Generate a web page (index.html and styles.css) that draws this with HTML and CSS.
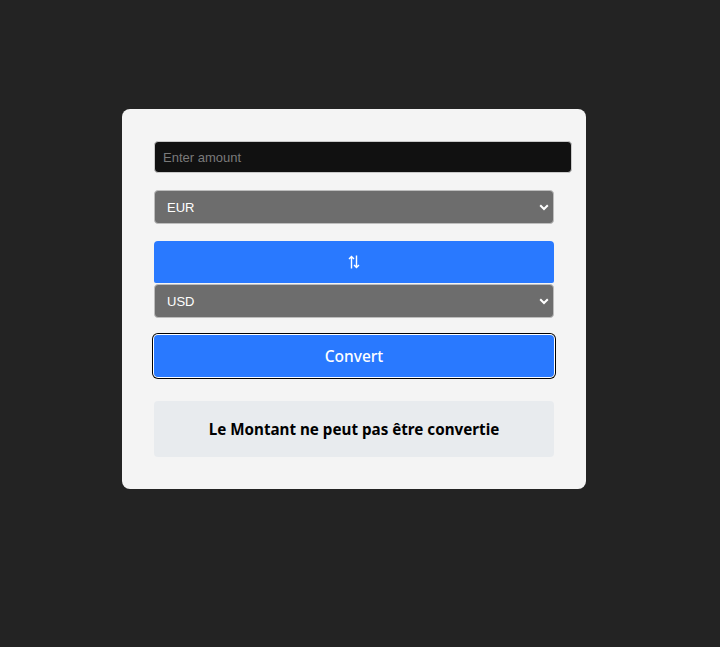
FILE: index.html
```html
<!DOCTYPE html>
<html lang="fr">
<head>
<meta charset="utf-8">
<title>Currency converter</title>
<link rel="stylesheet" href="styles.css">
</head>
<body>
<main class="card">
  <input class="amount" type="text" placeholder="Enter amount">
  <div class="select-wrap from">
    <select class="currency"><option>EUR</option></select>
    <svg class="chev" width="10" height="7" viewBox="0 0 10 7"><path d="M1.2 1.2 L5 5 L8.8 1.2" fill="none" stroke="#fff" stroke-width="2"/></svg>
  </div>
  <button class="swap" type="button" aria-label="swap">
    <svg width="12" height="14" viewBox="0 0 12 14"><path d="M3.5 13.5 V1.5 M1 4 L3.5 1.5 L6 4" fill="none" stroke="#fff" stroke-width="1.4"/><path d="M8.5 0.5 V12.5 M6 10 L8.5 12.5 L11 10" fill="none" stroke="#fff" stroke-width="1.4"/></svg>
  </button>
  <div class="select-wrap to">
    <select class="currency"><option>USD</option></select>
    <svg class="chev" width="10" height="7" viewBox="0 0 10 7"><path d="M1.2 1.2 L5 5 L8.8 1.2" fill="none" stroke="#fff" stroke-width="2"/></svg>
  </div>
  <button class="convert" type="button">Convert</button>
  <div class="result">Le Montant ne peut pas être convertie</div>
</main>
</body>
</html>
```
FILE: styles.css
```css
html, body {
  margin: 0;
  background: #232323;
}
body {
  padding: 109px 0 0 122px;
  font-family: "Liberation Sans", Arial, sans-serif;
}
.card {
  width: 400px;
  padding: 32px;
  background: #f4f4f4;
  border-radius: 8px;
  display: flex;
  flex-direction: column;
}
.amount {
  box-sizing: border-box;
  width: 418px;
  height: 32px;
  padding: 0 8px;
  border: 1px solid #c9c9c9;
  border-radius: 4px;
  background: #111111;
  color: #eee;
  font-family: "Liberation Sans", Arial, sans-serif;
  font-size: 13px;
  outline: none;
}
.amount::placeholder {
  color: #7a7a7a;
}
.select-wrap {
  position: relative;
  height: 34px;
}
.select-wrap.from {
  margin-top: 17px;
}
.select-wrap.to {
  margin-top: 1px;
}
.currency {
  appearance: none;
  -webkit-appearance: none;
  box-sizing: border-box;
  width: 100%;
  height: 34px;
  padding: 0 12px;
  border: 1px solid #bdbdbd;
  border-radius: 4px;
  background: #6d6d6d;
  color: #fff;
  font-family: "Liberation Sans", Arial, sans-serif;
  font-size: 13px;
}
.chev {
  position: absolute;
  right: 5px;
  top: 14px;
  pointer-events: none;
}
.swap {
  margin-top: 17px;
  height: 42px;
  border: none;
  border-radius: 4px 4px 2px 2px;
  background: #2979ff;
  display: flex;
  align-items: center;
  justify-content: center;
  padding: 0;
}
.convert {
  margin-top: 17px;
  height: 42px;
  border: none;
  border-radius: 4px;
  background: #2979ff;
  color: #fff;
  font-family: "Noto Sans", "Open Sans", sans-serif;
  font-size: 15.5px;
  font-weight: 500;
  box-shadow: 0 0 0 1px #fff, 0 0 0 2px #000;
}
.result {
  margin-top: 24px;
  height: 56px;
  border-radius: 4px;
  background: #e8ebee;
  color: #000;
  display: flex;
  align-items: center;
  justify-content: center;
  font-family: "Noto Sans", "Open Sans", sans-serif;
  font-size: 15.2px;
  font-weight: 700;
}
```
